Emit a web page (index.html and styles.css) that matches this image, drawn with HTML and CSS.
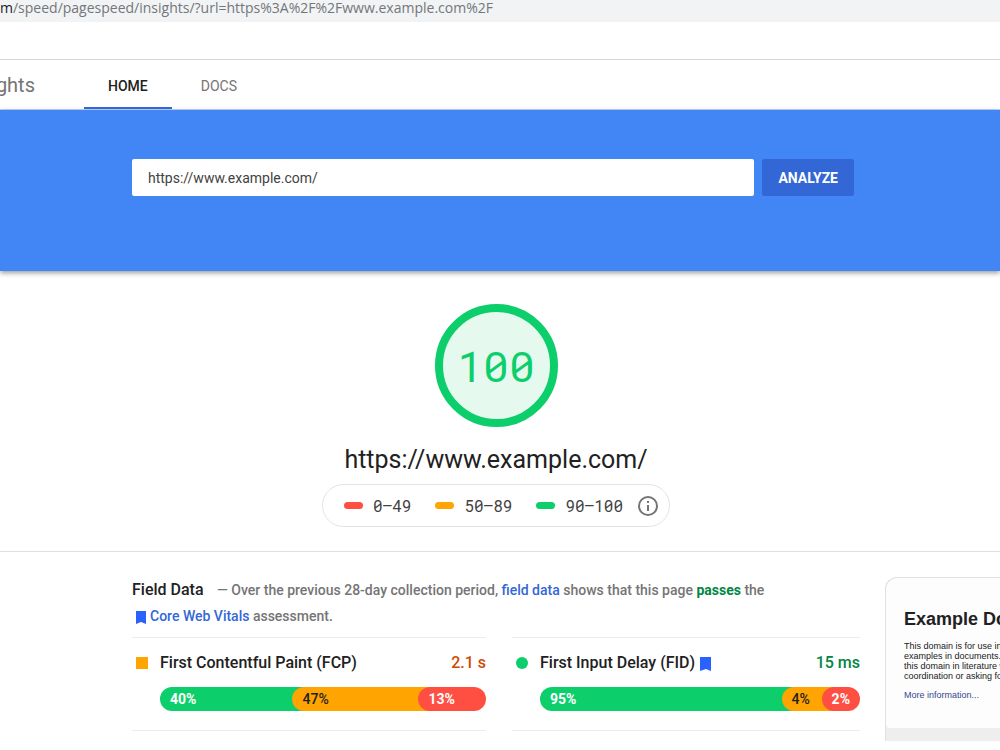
FILE: index.html
```html
<!DOCTYPE html>
<html lang="en">

<head>
    <meta charset="UTF-8">
    <meta name="viewport" content="width=device-width, initial-scale=1.0">
    <title>PageSpeed Insights</title>
    <link rel="stylesheet" href="styles.css">
</head>

<body>
    <div class="address-bar"><span class="host">m</span>/speed/pagespeed/insights/?url=https%3A%2F%2Fwww.example.com%2F</div>
    <div class="bookmarks"></div>

    <header class="site-header">
        <div class="brand">ghts</div>
        <nav class="tabs">
            <a class="tab active" href="#home">HOME</a>
            <a class="tab" href="#docs">DOCS</a>
        </nav>
    </header>

    <form class="banner">
        <input class="url-input" type="text" aria-label="Web page URL" value="https://www.example.com/">
        <button class="analyze" type="button">ANALYZE</button>
    </form>

    <section class="summary">
        <div class="gauge">100</div>
        <h1 class="page-url">https://www.example.com/</h1>
        <div class="scale">
            <span class="range poor">0–49</span>
            <span class="range average">50–89</span>
            <span class="range good">90–100</span>
            <a class="info" href="#scoring" aria-label="Scoring information">
                <svg width="22" height="22" viewBox="0 0 22 22">
                    <circle cx="11" cy="11" r="9" fill="none" stroke="#757575" stroke-width="2" />
                    <path d="M10 6h2v2h-2zM10 10h2v6h-2z" fill="#757575" />
                </svg>
            </a>
        </div>
    </section>

    <main class="report">
        <section class="field">
            <div class="field-text">
                <h2>Field Data</h2>
                — Over the previous 28-day collection period, <a href="#field">field data</a> shows that this page <b>passes</b> the
                <span class="vitals"><svg class="bookmark" width="12" height="14" viewBox="0 0 12 14"><path d="M1 1h10v13l-5-2-5 2z" fill="#2962ff" /></svg><a href="#vitals">Core Web Vitals</a></span> assessment.
            </div>
            <div class="metrics">
                <div class="metric">
                    <div class="metric-head">
                        <span class="mark square"></span>
                        <span class="name">First Contentful Paint (FCP)</span>
                        <span class="value average-text">2.1 s</span>
                    </div>
                    <div class="bar">
                        <div class="part fast" style="width: 48%">40%</div>
                        <div class="part medium" style="width: 46%">47%</div>
                        <div class="part slow">13%</div>
                    </div>
                </div>
                <div class="metric">
                    <div class="metric-head">
                        <span class="mark circle"></span>
                        <span class="name">First Input Delay (FID)
                            <svg class="bookmark" width="12" height="14" viewBox="0 0 12 14"><path d="M1 0h11v14l-5-2-6 2z" fill="#2962ff" /></svg>
                        </span>
                        <span class="value good-text">15 ms</span>
                    </div>
                    <div class="bar">
                        <div class="part fast" style="width: 83%">95%</div>
                        <div class="part medium" style="width: 20%">4%</div>
                        <div class="part slow">2%</div>
                    </div>
                </div>
            </div>
        </section>

        <aside class="preview">
            <div class="preview-page">
                <h3>Example Domain</h3>
                <p>This domain is for use in<br>examples in documents.<br>this domain in literature w<br>coordination or asking for</p>
                <a href="#more">More information...</a>
            </div>
        </aside>
    </main>
</body>

</html>
```

FILE: styles.css
```css
* {
    box-sizing: border-box;
}

body {
    font-family: Roboto, sans-serif;
    margin: 0;
    color: #212121;
    background-color: #fff;
    overflow-x: hidden;
}

a {
    color: #3367d6;
    text-decoration: none;
}

.address-bar {
    height: 22px;
    line-height: 16px;
    background-color: #f1f3f4;
    color: #73777b;
    font-family: "Open Sans", sans-serif;
    font-size: 14px;
    white-space: nowrap;
}

.address-bar .host {
    color: #202124;
}

.bookmarks {
    height: 38px;
    border-bottom: 1px solid #d5d6dc;
}

.site-header {
    display: flex;
    height: 50px;
    border-bottom: 1px solid #c5d5f5;
}

.brand {
    display: flex;
    justify-content: flex-end;
    align-items: center;
    width: 35px;
    margin-right: 49px;
    overflow: hidden;
    color: #757575;
    font-size: 20px;
}

.tabs {
    display: flex;
    gap: 5px;
}

.tab {
    padding: 0 24px;
    line-height: 52px;
    color: #757575;
    font-size: 14px;
}

.tab.active {
    border-bottom: 2px solid #3367d6;
    color: #212121;
    font-weight: 500;
}

.banner {
    display: flex;
    gap: 8px;
    height: 161px;
    padding: 49px 146px 0 132px;
    background-color: #4285f4;
    box-shadow: 0 2px 5px rgba(0, 0, 0, 0.4);
}

.url-input {
    flex: 1;
    height: 37px;
    padding: 0 16px;
    border: 0;
    border-radius: 2px;
    color: #424242;
    font-family: inherit;
    font-size: 14px;
}

.analyze {
    height: 37px;
    padding: 0 16px;
    border: 0;
    border-radius: 2px;
    background-color: #3367d6;
    color: #fff;
    font-family: inherit;
    font-size: 14px;
    font-weight: 700;
}

.summary {
    display: flex;
    flex-direction: column;
    align-items: center;
    padding: 33px 8px 24px 0;
    border-bottom: 1px solid #e0e0e0;
}

.gauge {
    width: 123px;
    height: 123px;
    border: 8px solid #0cce6b;
    border-radius: 50%;
    background-color: #e6f9ef;
    color: #0cce6b;
    font-family: "Roboto Mono", Inter, monospace;
    font-feature-settings: "zero", "tnum";
    font-size: 43px;
    font-weight: 400;
    line-height: 108px;
    text-align: center;
}

.page-url {
    margin: 17px 0 8px;
    font-size: 25px;
    font-weight: 400;
    line-height: 32px;
}

.scale {
    display: flex;
    align-items: center;
    height: 43px;
    padding: 0 10px 0 21px;
    border: 1px solid #e3e3e3;
    border-radius: 22px;
    color: #424242;
    font-family: "Roboto Mono", Inter, monospace;
    font-feature-settings: "zero", "tnum";
    font-size: 16px;
    font-weight: 400;
}

.range {
    display: flex;
    align-items: center;
    margin-right: 24px;
}

.range.good {
    margin-right: 14px;
}

.range::before {
    content: "";
    width: 19px;
    height: 7px;
    margin-right: 10px;
    border-radius: 4px;
}

.poor::before {
    background-color: #ff4e42;
}

.average::before {
    background-color: #ffa400;
}

.good::before {
    background-color: #0cce6b;
}

.info svg {
    display: block;
}

.report {
    display: flex;
    gap: 25px;
    padding: 25px 0 9px 132px;
}

.field {
    flex: 1;
}

.field-text {
    color: #757575;
    font-size: 14px;
    font-weight: 500;
    line-height: 26px;
    padding-right: 72px;
}

.field-text h2 {
    display: inline;
    margin: 0 10px 0 0;
    color: #212121;
    font-size: 16px;
    font-weight: 500;
}

.field-text b {
    color: #018642;
    font-weight: 700;
}

.vitals {
    display: inline-block;
    padding-left: 3px;
}

.bookmark {
    vertical-align: -3px;
}

.vitals .bookmark {
    margin-right: 3px;
}

.metrics {
    display: grid;
    grid-template-columns: 354fr 348fr;
    gap: 26px;
    margin-top: 8px;
}

.metric {
    height: 94px;
    padding-top: 13px;
    border-top: 1px solid #ebebeb;
    border-bottom: 1px solid #ebebeb;
}

.metric-head {
    display: flex;
    align-items: center;
    font-size: 16px;
    font-weight: 500;
    line-height: 24px;
}

.mark {
    width: 12px;
    height: 12px;
    margin: 0 12px 0 4px;
}

.square {
    background-color: #ffa400;
}

.circle {
    border-radius: 50%;
    background-color: #0cce6b;
}

.value {
    margin-left: auto;
}

.average-text {
    color: #d04900;
}

.good-text {
    color: #018642;
}

.bar {
    display: flex;
    height: 24px;
    margin: 12px 0 0 28px;
}

.part {
    flex: none;
    padding-left: 10px;
    border-radius: 12px;
    color: #fff;
    font-size: 14px;
    font-weight: 700;
    line-height: 24px;
}

.part + .part {
    margin-left: -24px;
}

.fast {
    background-color: #0cce6b;
}

.medium {
    background-color: #ffa400;
    color: #212121;
    font-weight: 500;
}

.slow {
    flex: 1;
    background-color: #ff4e42;
}

.preview {
    width: 115px;
    height: 164px;
    border: 1px solid #e0e0e0;
    border-width: 1px 0 0 1px;
    border-radius: 12px 0 0 0;
    background-color: #eee;
    overflow: hidden;
}

.preview-page {
    height: 150px;
    padding: 30px 0 0 18px;
    border-radius: 12px 0 0 4px;
    background-color: #fdfdfd;
    font-family: "Liberation Sans", Arial, sans-serif;
    font-size: 9px;
    line-height: 10px;
    white-space: nowrap;
}

.preview-page h3 {
    margin: 0;
    font-size: 18px;
    line-height: 22px;
}

.preview-page p {
    margin: 11px 0 9px;
}

.preview-page a {
    color: #38488f;
}
```
